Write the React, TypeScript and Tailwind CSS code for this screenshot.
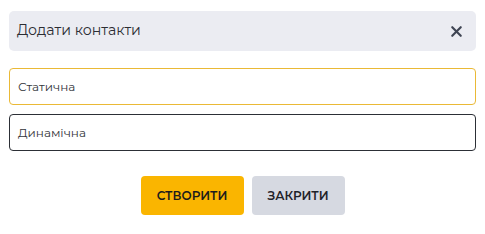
import { X } from "lucide-react";

export default function App() {
  return (
    <div
      className="w-[485px] h-[234px] bg-white px-[9px] pt-[11px]"
      style={{ fontFamily: "Montserrat, Inter, 'Noto Sans', sans-serif" }}
    >
      <div className="flex h-[40px] items-center justify-between rounded-[5px] bg-[#ebecf2] pl-[8px] pr-[11px]">
        <span className="text-[14.2px] text-[#2b2d33]">Додати контакти</span>
        <X className="h-[17px] w-[17px] text-[#3e4452]" strokeWidth={3} />
      </div>

      <div className="mt-[17px] flex flex-col gap-[9px]">
        <div className="flex h-[37px] items-center rounded-[4px] border border-[#eab936] px-[8px] text-[12px] text-[#33353b]">
          Статична
        </div>
        <div className="flex h-[37px] items-center rounded-[4px] border border-[#2c2f36] px-[8px] text-[12px] text-[#33353b]">
          Динамічна
        </div>
      </div>

      <div className="mt-[25px] flex justify-center gap-[8px]">
        <button className="h-[39px] w-[103px] rounded-[4px] bg-[#fab500] text-[12px] font-semibold text-[#1c1c1c]">
          СТВОРИТИ
        </button>
        <button className="h-[39px] w-[93px] rounded-[4px] bg-[#d6d9e1] text-[12px] font-semibold text-[#1f2229]">
          ЗАКРИТИ
        </button>
      </div>
    </div>
  );
}
